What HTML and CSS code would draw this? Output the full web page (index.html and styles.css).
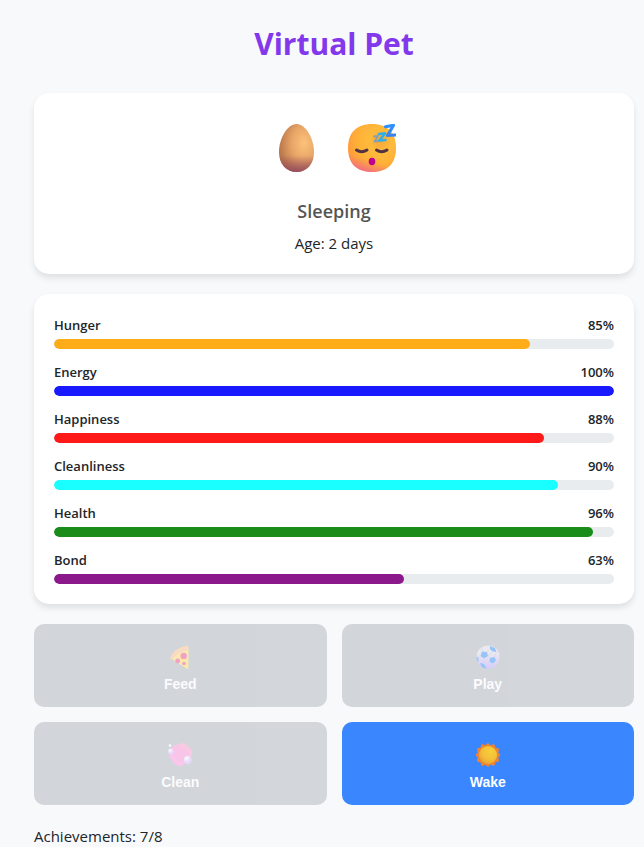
FILE: index.html
```html
<!DOCTYPE html>
<html lang="en">
<head>
<meta charset="utf-8">
<meta name="viewport" content="width=device-width, initial-scale=1">
<title>Virtual Pet</title>
<link rel="stylesheet" href="styles.css">
</head>
<body>
<main class="game">
  <h1 class="title">Virtual Pet</h1>

  <section class="card pet">
    <div class="pet-icons">
      <svg class="pet-icon" viewBox="0 0 48 48" role="img" aria-label="Egg">
        <defs>
          <radialGradient id="egg-base" cx=".72" cy=".4" r=".8">
            <stop offset="0" stop-color="#fcc27c"/><stop offset=".45" stop-color="#e8a566"/><stop offset="1" stop-color="#ad6b45"/>
          </radialGradient>
          <linearGradient id="egg-shade" x1="0" y1="0" x2="0" y2="1">
            <stop offset=".65" stop-color="#8f4560" stop-opacity="0"/><stop offset="1" stop-color="#8f4560" stop-opacity=".85"/>
          </linearGradient>
        </defs>
        <path d="M24.500 0C34 0 42 15 42 28C42 40 35 48 24.500 48S7 40 7 28C7 15 15 0 24.500 0Z" fill="url(#egg-base)"/>
        <path d="M24.500 0C34 0 42 15 42 28C42 40 35 48 24.500 48S7 40 7 28C7 15 15 0 24.500 0Z" fill="url(#egg-shade)"/>
      </svg>
      <svg class="pet-icon" viewBox="0 0 48 48" role="img" aria-label="Sleeping face">
        <defs>
          <radialGradient id="face-base" cx=".68" cy=".35" r=".8">
            <stop offset="0" stop-color="#f5a638"/><stop offset=".3" stop-color="#ffbb3c"/><stop offset=".65" stop-color="#ffae37"/><stop offset="1" stop-color="#ff8f40"/>
          </radialGradient>
          <linearGradient id="face-shade" x1=".6" y1=".2" x2=".35" y2="1">
            <stop offset=".68" stop-color="#f06c83" stop-opacity="0"/><stop offset="1" stop-color="#ee649a" stop-opacity=".8"/>
          </linearGradient>
          <linearGradient id="zed" x1="0" y1="0" x2="0" y2="1">
            <stop offset="0" stop-color="#2f91ff"/><stop offset="1" stop-color="#3a83ec"/>
          </linearGradient>
        </defs>
        <path d="M24 0C40 0 48 9 48 24S40 48 24 48S0 39 0 24S8 0 24 0Z" fill="url(#face-base)"/>
        <path d="M24 0C40 0 48 9 48 24S40 48 24 48S0 39 0 24S8 0 24 0Z" fill="url(#face-shade)"/>
        <path d="M8.500 26Q13.500 29.500 19 26M28.500 26Q33.500 29.500 39 26" fill="none" stroke="#513342" stroke-width="3" stroke-linecap="round"/>
        <ellipse cx="24" cy="37.500" rx="3.300" ry="3.700" fill="#bd0092"/>
        <path d="M26 12.500L30 12L26.500 17.500L30.500 17" fill="none" stroke="#899fae" stroke-width="1.800" stroke-linejoin="round" stroke-linecap="round"/>
        <path d="M31 10L37 9.200L31.500 16.500L37.500 16" fill="none" stroke="#2eb0e6" stroke-width="2.600" stroke-linejoin="round" stroke-linecap="round"/>
        <path d="M37.500 2.800L45.500 1.300L39.500 11.500L47.500 11" fill="none" stroke="url(#zed)" stroke-width="3.200" stroke-linejoin="round" stroke-linecap="round"/>
      </svg>
    </div>
    <p class="pet-state">Sleeping</p>
    <p class="pet-age">Age: 2 days</p>
  </section>

  <section class="card stats">
    <div class="stat"><div class="stat-head"><span>Hunger</span><span>85%</span></div><div class="track"><div class="fill hunger" style="width:85%"></div></div></div>
    <div class="stat"><div class="stat-head"><span>Energy</span><span>100%</span></div><div class="track"><div class="fill energy" style="width:100%"></div></div></div>
    <div class="stat"><div class="stat-head"><span>Happiness</span><span>88%</span></div><div class="track"><div class="fill happiness" style="width:87.5%"></div></div></div>
    <div class="stat"><div class="stat-head"><span>Cleanliness</span><span>90%</span></div><div class="track"><div class="fill cleanliness" style="width:90%"></div></div></div>
    <div class="stat"><div class="stat-head"><span>Health</span><span>96%</span></div><div class="track"><div class="fill health" style="width:96.2%"></div></div></div>
    <div class="stat"><div class="stat-head"><span>Bond</span><span>63%</span></div><div class="track"><div class="fill bond" style="width:62.5%"></div></div></div>
  </section>

  <div class="actions">
    <button class="action" type="button" disabled>
      <svg class="action-icon" viewBox="0 0 24 24" aria-hidden="true">
        <path d="M4 11L20.500 4V22.500Q20.500 25 18.500 23.500L4 14Z" fill="#ffdb62"/>
        <path d="M2 12.500Q6 3 19 .5Q21 .5 20.500 4.500Q11 6 5.500 13.500Q2 15 2 12.500Z" fill="#fbbd8c"/>
        <circle cx="15.700" cy="11" r="3.200" fill="#ee4a8c"/><circle cx="9.700" cy="16" r="2.400" fill="#ee4a8c"/><circle cx="16" cy="18.500" r="1.800" fill="#ee4a8c"/>
      </svg>
      <span>Feed</span>
    </button>
    <button class="action" type="button" disabled>
      <svg class="action-icon" viewBox="0 0 24 24" aria-hidden="true">
        <defs>
          <linearGradient id="ball" x1="0" y1="0" x2="0" y2="1"><stop offset=".3" stop-color="#dfdae6"/><stop offset="1" stop-color="#b5a0ff"/></linearGradient>
          <clipPath id="ball-clip"><circle cx="12" cy="12" r="11.500"/></clipPath>
        </defs>
        <circle cx="12" cy="12" r="11.500" fill="url(#ball)"/>
        <g clip-path="url(#ball-clip)">
          <path d="M6 6.500L11 7L12 11L8 13.500L4.500 11ZM14 1L19 3L20.500 7L16.500 6.500L14 4ZM14 13L18.500 12L20 15.500L17 18.500L13.500 17ZM0 11L2.500 13V17L0 17ZM4 18L8 19L11 24H6Z" fill="#3993fa"/>
          <path d="M11 7L14 4M12 11L14 13M8 13.500L8 19M4.500 11L2.500 13M6 6.500L6 3M13.500 17L11 22M16.500 6.500L12 11M20.500 7L18.500 12" fill="none" stroke="#b8b1c6" stroke-width=".6"/>
        </g>
      </svg>
      <span>Play</span>
    </button>
    <button class="action" type="button" disabled>
      <svg class="action-icon" viewBox="0 0 24 24" aria-hidden="true">
        <defs>
          <linearGradient id="soap" x1="1" y1="0" x2="0" y2="1"><stop offset="0" stop-color="#f7a4c4"/><stop offset=".5" stop-color="#fa93d5"/><stop offset="1" stop-color="#ff98e4"/></linearGradient>
          <radialGradient id="bubble" cx=".35" cy=".3"><stop offset="0" stop-color="#fff"/><stop offset="1" stop-color="#d5b8f5"/></radialGradient>
        </defs>
        <path d="M4 3.500L12 .5Q16-.5 18 1.500L23 6Q24.500 8 24 11L21 18L13 23Q10 24 7 21L1.500 14Q.5 12 1 10Z" fill="url(#soap)"/>
        <path d="M8 5L16 3L20 9L16 18L9 20L4 11Z" fill="#f58bdc" opacity=".3"/>
        <circle cx="3" cy="8.500" r="3" fill="url(#bubble)"/><circle cx="2" cy="2.500" r="1.300" fill="#fff"/><circle cx="19.800" cy="17" r="4.200" fill="url(#bubble)"/>
      </svg>
      <span>Clean</span>
    </button>
    <button class="action action-wake" type="button">
      <svg class="action-icon" viewBox="0 0 24 24" aria-hidden="true">
        <defs><radialGradient id="sun" cx=".65" cy=".3" r=".8"><stop offset="0" stop-color="#f9cf3a"/><stop offset=".6" stop-color="#f3bd38"/><stop offset="1" stop-color="#e89b32"/></radialGradient></defs>
        <path d="M12 .5L14.600 2.700L18 1.600L19.100 5L22.600 5.900L21.800 9.400L24 12L21.800 14.600L22.600 18.100L19.100 19L18 22.400L14.600 21.300L12 23.500L9.400 21.300L6 22.400L4.900 19L1.400 18.100L2.200 14.600L0 12L2.200 9.400L1.400 5.900L4.900 5L6 1.600L9.400 2.700Z" fill="#ee842f" stroke="#ee842f" stroke-linejoin="round"/>
        <circle cx="12" cy="12" r="9" fill="url(#sun)"/>
      </svg>
      <span>Wake</span>
    </button>
  </div>

  <p class="achievements">Achievements: 7/8</p>
</main>
</body>
</html>
```
FILE: styles.css
```css
* { box-sizing: border-box; }

body {
  margin: 0;
  padding: 0 10px 0 34px;
  background: #f8f9fb;
  color: #212529;
  font-family: "Segoe UI", "Open Sans", "Noto Sans", sans-serif;
  font-size: 15px;
  line-height: 22px;
}

h1, p { margin: 0; }

.game {
  max-width: 600px;
  margin: 0 auto;
  padding-top: 20px;
}

.title {
  margin-bottom: 25px;
  color: #8338ec;
  font-size: 30px;
  font-weight: 700;
  line-height: 48px;
  text-align: center;
}

.card {
  margin-bottom: 20px;
  padding: 20px;
  border-radius: 15px;
  background: #fff;
  box-shadow: 0 4px 6px rgba(0, 0, 0, 0.1);
}

.pet { text-align: center; }

.pet-icons {
  display: flex;
  justify-content: center;
  gap: 28px;
  padding: 11px 0 25px;
}

.pet-icon {
  width: 48px;
  height: 48px;
}

.pet-state {
  margin-bottom: 7px;
  color: #555;
  font-size: 18px;
  font-weight: 600;
  line-height: 28px;
}

.stats {
  display: grid;
  gap: 12px;
}

.stat-head {
  display: flex;
  justify-content: space-between;
  margin-bottom: 3px;
  font-size: 13px;
  font-weight: 600;
  line-height: 22px;
}

.track {
  height: 10px;
  overflow: hidden;
  border-radius: 5px;
  background: #e9ecef;
}

.fill {
  height: 100%;
  border-radius: 5px;
}

.hunger { background: #ffac19; }
.energy { background: #1919ff; }
.happiness { background: #ff1919; }
.cleanliness { background: #19ffff; }
.health { background: #198c19; }
.bond { background: #8c198c; }

.actions {
  display: grid;
  grid-template-columns: 1fr 1fr;
  gap: 15px;
  margin-bottom: 20px;
}

.action {
  display: flex;
  flex-direction: column;
  align-items: center;
  gap: 7px;
  padding: 21px 15px 15px;
  border: 0;
  border-radius: 10px;
  background: #3a86ff;
  color: #fff;
  font: bold 14px/16px "Liberation Sans", Arial, sans-serif;
  cursor: pointer;
}

.action:disabled {
  background: #aeb3bb;
  opacity: 0.5;
  cursor: not-allowed;
}

.action-icon {
  width: 24px;
  height: 24px;
  overflow: visible;
}
```
